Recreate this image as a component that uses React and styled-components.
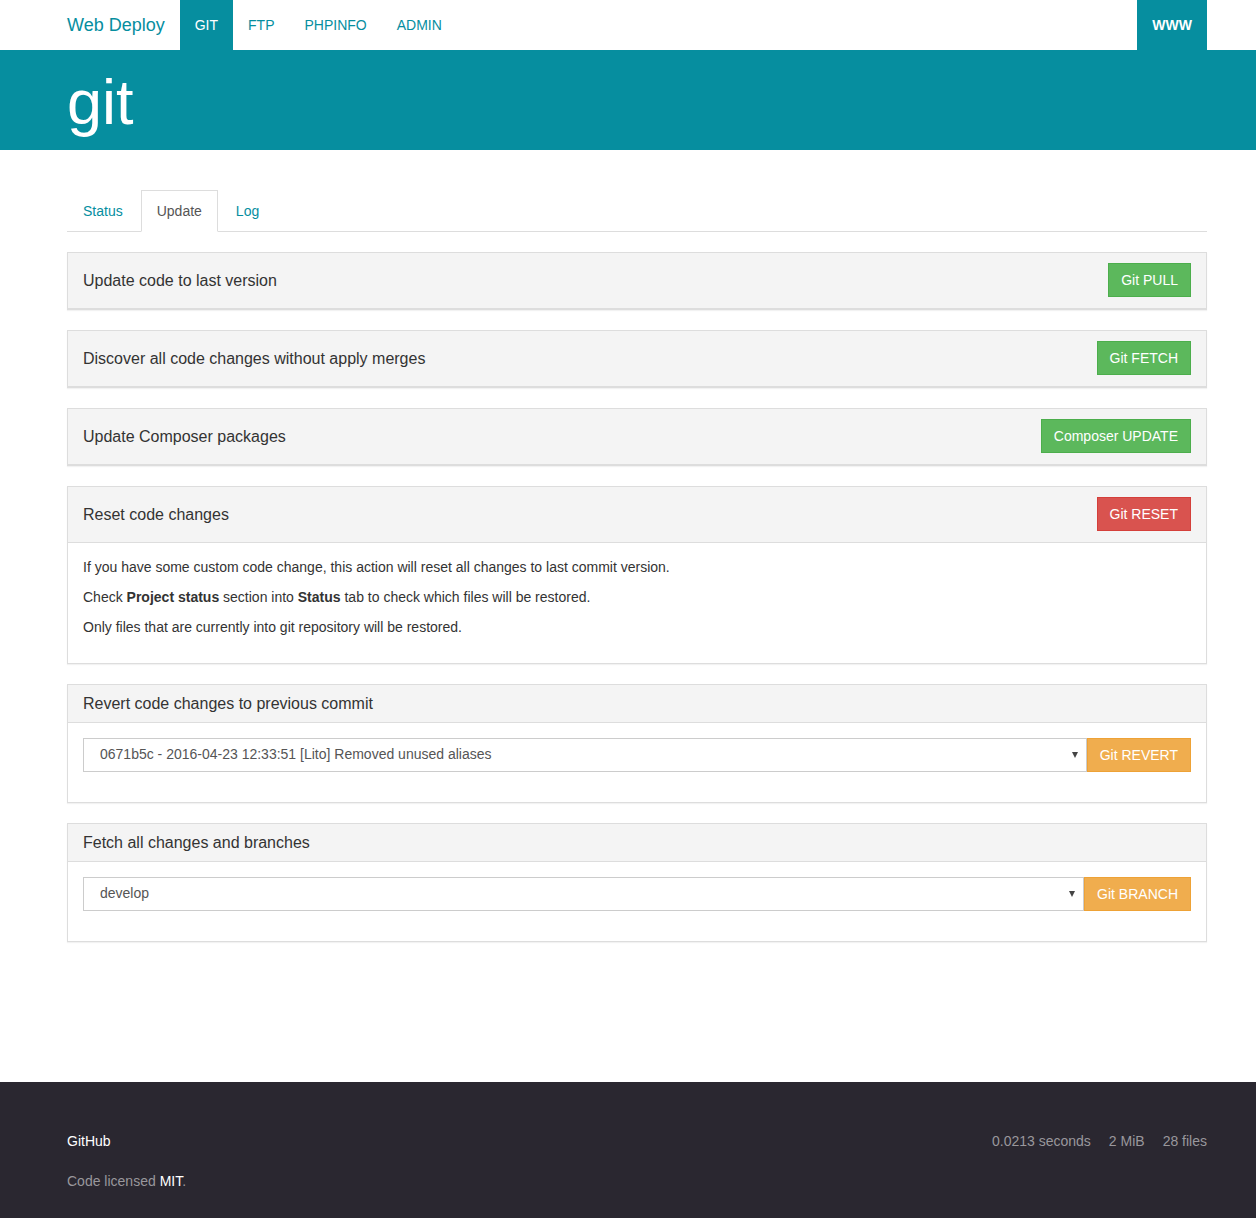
import React from 'react';
import styled, { createGlobalStyle } from 'styled-components';

const GlobalStyle = createGlobalStyle`
  body {
    margin: 0;
    font-family: "Liberation Sans", Arial, Helvetica, sans-serif;
    font-size: 14px;
    line-height: 1.42857;
    color: #333;
    background: #fff;
  }
  * { box-sizing: border-box; }
`

const TEAL = '#068e9f';

const Container = styled.div`
  width: 1140px;
  margin-left: 67px;
`

const Navbar = styled.nav`
  height: 50px;
  background: #fff;
`

const NavInner = styled(Container)`
  display: flex;
  align-items: stretch;
  height: 50px;
`

const Brand = styled.a`
  font-size: 18px;
  line-height: 20px;
  padding: 15px 15px 15px 0;
  color: ${TEAL};
  text-decoration: none;
`

const NavItem = styled.a`
  padding: 15px;
  line-height: 20px;
  font-size: 14px;
  text-decoration: none;
  color: ${p => (p.$active ? '#fff' : TEAL)};
  background: ${p => (p.$active ? TEAL : 'transparent')};
  font-weight: ${p => (p.$bold ? 700 : 400)};
  margin-left: ${p => (p.$right ? 'auto' : '0')};
`

const Jumbo = styled.header`
  height: 100px;
  background: ${TEAL};
  padding-top: 18px;
`

const Title = styled.h1`
  margin: 0;
  font-size: 63px;
  line-height: 1.1;
  font-weight: 400;
  color: #fff;
`

const Main = styled(Container)`
  padding-top: 40px;
`

const Tabs = styled.ul`
  display: flex;
  list-style: none;
  margin: 0 0 20px;
  padding: 0;
  border-bottom: 1px solid #ddd;
`

const Tab = styled.li`
  margin-bottom: -1px;
`

const TabLink = styled.a`
  display: block;
  margin-right: 2px;
  padding: 10px 15px;
  line-height: 20px;
  text-decoration: none;
  border: 1px solid ${p => (p.$active ? '#ddd' : 'transparent')};
  border-bottom-color: ${p => (p.$active ? '#fff' : 'transparent')};
  background: ${p => (p.$active ? '#fff' : 'transparent')};
  color: ${p => (p.$active ? '#555' : TEAL)};
`

const Panel = styled.section`
  border: 1px solid #ddd;
  margin-bottom: 20px;
  background: #fff;
  box-shadow: 0 1px 1px rgba(0, 0, 0, 0.05);
`

const PanelHeading = styled.div`
  display: flex;
  align-items: center;
  justify-content: space-between;
  padding: ${p => (p.$withButton ? '10px 15px 11px' : '10px 15px')};
  background: #f4f4f4;
  border-bottom: 1px solid #ddd;
`

const PanelTitle = styled.h3`
  margin: 0;
  font-size: 16px;
  line-height: 17px;
  font-weight: 400;
  color: #333;
`

const PanelBody = styled.div`
  padding: 15px;
`

const Para = styled.p`
  margin: 0 0 10px;
`

const colors = {
  success: ['#5cb85c', '#4cae4c'],
  danger: ['#d9534f', '#d43f3a'],
  warning: ['#f0ad4e', '#eea236'],
};

const Button = styled.button`
  font-family: inherit;
  font-size: 14px;
  line-height: 20px;
  padding: 6px 12px;
  color: #fff;
  background: ${p => colors[p.$kind][0]};
  border: 1px solid ${p => colors[p.$kind][1]};
  border-radius: 0;
  white-space: nowrap;
`

const FormGroup = styled.div`
  display: flex;
  margin-bottom: 15px;
`

const Select = styled.div`
  flex: 1;
  display: flex;
  align-items: center;
  justify-content: space-between;
  height: 34px;
  padding: 6px 8px 6px 16px;
  border: 1px solid #ccc;
  color: #555;
  font-size: 14px;
`

const Caret = styled.span`
  width: 0;
  height: 0;
  border-left: 3px solid transparent;
  border-right: 3px solid transparent;
  border-top: 6px solid #444;
`

const Footer = styled.footer`
  margin-top: 140px;
  background: #2a2730;
  color: #99979c;
  padding: 50px 0 27px;
`

const FooterRow = styled(Container)`
  display: flex;
  justify-content: space-between;
  align-items: flex-start;
`

const FooterLink = styled.a`
  color: #fff;
  text-decoration: none;
`

const FooterText = styled.p`
  margin: 0 0 20px;
  &:last-child { margin-bottom: 0; }
`

const Stats = styled.div`
  display: flex;
  gap: 18px;
`

const ActionPanel = ({ title, label, kind }) => (
  <Panel>
    <PanelHeading $withButton>
      <PanelTitle>{title}</PanelTitle>
      <Button $kind={kind}>{label}</Button>
    </PanelHeading>
  </Panel>
)

const SelectPanel = ({ title, value, label }) => (
  <Panel>
    <PanelHeading>
      <PanelTitle>{title}</PanelTitle>
    </PanelHeading>
    <PanelBody>
      <FormGroup>
        <Select>
          <span>{value}</span>
          <Caret />
        </Select>
        <Button $kind="warning">{label}</Button>
      </FormGroup>
    </PanelBody>
  </Panel>
)

const App = () => (
  <>
    <GlobalStyle />
    <Navbar>
      <NavInner>
        <Brand href="#">Web Deploy</Brand>
        <NavItem href="#" $active>GIT</NavItem>
        <NavItem href="#">FTP</NavItem>
        <NavItem href="#">PHPINFO</NavItem>
        <NavItem href="#">ADMIN</NavItem>
        <NavItem href="#" $active $bold $right>WWW</NavItem>
      </NavInner>
    </Navbar>
    <Jumbo>
      <Container>
        <Title>git</Title>
      </Container>
    </Jumbo>
    <Main>
      <Tabs>
        <Tab><TabLink href="#">Status</TabLink></Tab>
        <Tab><TabLink href="#" $active>Update</TabLink></Tab>
        <Tab><TabLink href="#">Log</TabLink></Tab>
      </Tabs>

      <ActionPanel title="Update code to last version" label="Git PULL" kind="success" />
      <ActionPanel title="Discover all code changes without apply merges" label="Git FETCH" kind="success" />
      <ActionPanel title="Update Composer packages" label="Composer UPDATE" kind="success" />

      <Panel>
        <PanelHeading $withButton>
          <PanelTitle>Reset code changes</PanelTitle>
          <Button $kind="danger">Git RESET</Button>
        </PanelHeading>
        <PanelBody>
          <Para>If you have some custom code change, this action will reset all changes to last commit version.</Para>
          <Para>Check <strong>Project status</strong> section into <strong>Status</strong> tab to check which files will be restored.</Para>
          <Para>Only files that are currently into git repository will be restored.</Para>
        </PanelBody>
      </Panel>

      <SelectPanel
        title="Revert code changes to previous commit"
        value="0671b5c - 2016-04-23 12:33:51 [Lito] Removed unused aliases"
        label="Git REVERT"
      />
      <SelectPanel title="Fetch all changes and branches" value="develop" label="Git BRANCH" />
    </Main>
    <Footer>
      <FooterRow>
        <div>
          <FooterText><FooterLink href="#">GitHub</FooterLink></FooterText>
          <FooterText>Code licensed <FooterLink href="#">MIT</FooterLink>.</FooterText>
        </div>
        <Stats>
          <span>0.0213 seconds</span>
          <span>2 MiB</span>
          <span>28 files</span>
        </Stats>
      </FooterRow>
    </Footer>
  </>
)

export default App;
